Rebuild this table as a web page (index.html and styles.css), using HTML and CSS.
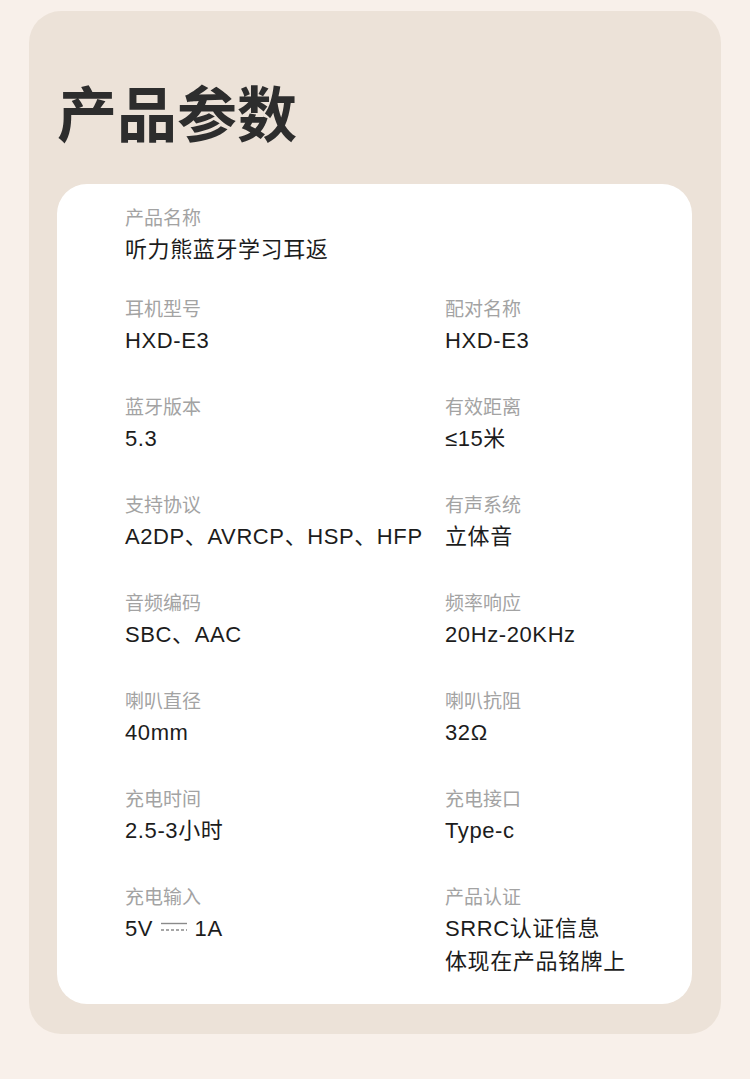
FILE: index.html
```html
<!DOCTYPE html>
<html lang="zh-CN">
<head>
<meta charset="utf-8">
<title>产品参数</title>
<link rel="stylesheet" href="styles.css">
</head>
<body>
<main class="panel">
  <h1 class="title">产品参数</h1>
  <section class="card">
    <div class="item full">
      <div class="label">产品名称</div>
      <div class="value">听力熊蓝牙学习耳返</div>
    </div>
    <div class="grid">
      <div class="item"><div class="label">耳机型号</div><div class="value">HXD-E3</div></div>
      <div class="item"><div class="label">配对名称</div><div class="value">HXD-E3</div></div>
      <div class="item"><div class="label">蓝牙版本</div><div class="value">5.3</div></div>
      <div class="item"><div class="label">有效距离</div><div class="value">≤15米</div></div>
      <div class="item"><div class="label">支持协议</div><div class="value">A2DP、AVRCP、HSP、HFP</div></div>
      <div class="item"><div class="label">有声系统</div><div class="value">立体音</div></div>
      <div class="item"><div class="label">音频编码</div><div class="value">SBC、AAC</div></div>
      <div class="item"><div class="label">频率响应</div><div class="value">20Hz-20KHz</div></div>
      <div class="item"><div class="label">喇叭直径</div><div class="value">40mm</div></div>
      <div class="item"><div class="label">喇叭抗阻</div><div class="value">32Ω</div></div>
      <div class="item"><div class="label">充电时间</div><div class="value">2.5-3小时</div></div>
      <div class="item"><div class="label">充电接口</div><div class="value">Type-c</div></div>
      <div class="item"><div class="label">充电输入</div><div class="value">5V <svg class="dc" width="26" height="12" viewBox="0 0 26 12" aria-label="直流"><line x1="0" y1="2.5" x2="26" y2="2.5" stroke="#8a8a8a" stroke-width="1.4"/><line x1="0" y1="9" x2="26" y2="9" stroke="#8a8a8a" stroke-width="1.4" stroke-dasharray="3 2"/></svg> 1A</div></div>
      <div class="item"><div class="label">产品认证</div><div class="value">SRRC认证信息<br>体现在产品铭牌上</div></div>
    </div>
  </section>
</main>
</body>
</html>
```
FILE: styles.css
```css
html, body {
  margin: 0;
  padding: 0;
}
body {
  background: #f8f0ea;
  font-family: "Liberation Sans", "Noto Sans CJK SC", sans-serif;
  width: 750px;
  height: 1079px;
  overflow: hidden;
}
.panel {
  margin: 11px 29px 0 29px;
  background: #ece2d8;
  border-radius: 32px;
  padding: 70px 29px 30px 28px;
}
.title {
  margin: 0 0 43px 0;
  font-family: "Noto Sans CJK SC", sans-serif;
  font-weight: 700;
  font-size: 60px;
  line-height: 60px;
  color: #2d2d2d;
  letter-spacing: 0;
}
.card {
  background: #ffffff;
  border-radius: 30px;
  padding: 21px 20px 26px 68px;
}
.item.full {
  margin-bottom: 30px;
}
.grid {
  display: grid;
  grid-template-columns: 320px 1fr;
  row-gap: 37px;
}
.label {
  font-family: "Noto Sans CJK SC", sans-serif;
  font-size: 19px;
  line-height: 24px;
  color: #a3a3a3;
}
.value {
  margin-top: 4px;
  font-size: 22px;
  line-height: 33px;
  letter-spacing: 0.6px;
  color: #1c1c1c;
  white-space: nowrap;
}
.dc {
  vertical-align: 3px;
  margin: 0 1px;
}
```
